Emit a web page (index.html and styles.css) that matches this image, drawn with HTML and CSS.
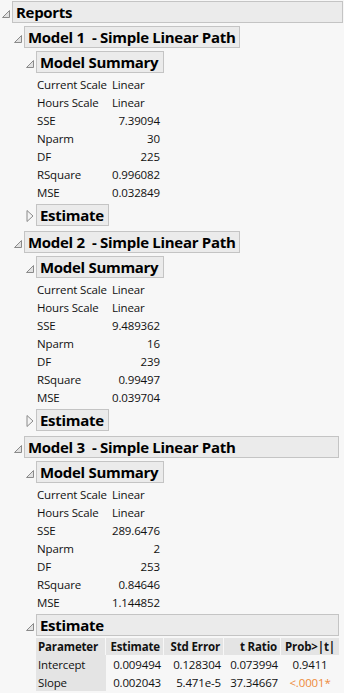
FILE: index.html
```html
<!DOCTYPE html>
<html>
<head>
<meta charset="utf-8">
<title>Reports</title>
<link rel="stylesheet" href="styles.css">
</head>
<body>

<div class="node root">
  <div class="head">
    <span class="tog"><svg width="10" height="10" viewBox="0 0 10 10"><polygon points="1.5,8.5 8.5,1.5 8.5,8.5" class="tri-open"/></svg></span>
    <div class="title">Reports</div>
  </div>
  <div class="body">

    <!-- model 1 -->
    <div class="node model">
      <div class="head">
        <span class="tog"><svg width="10" height="10" viewBox="0 0 10 10"><polygon points="1.5,8.5 8.5,1.5 8.5,8.5" class="tri-open"/></svg></span>
        <div class="title">Model 1 &nbsp;- Simple Linear Path</div>
      </div>
      <div class="body">
        <div class="node">
          <div class="head">
            <span class="tog"><svg width="10" height="10" viewBox="0 0 10 10"><polygon points="1.5,8.5 8.5,1.5 8.5,8.5" class="tri-open"/></svg></span>
            <div class="title">Model Summary</div>
          </div>
          <div class="body">
            <table class="summary">
              <tr><td>Current Scale</td><td>Linear</td></tr>
              <tr><td>Hours Scale</td><td>Linear</td></tr>
              <tr><td>SSE</td><td class="num">7.39094</td></tr>
              <tr><td>Nparm</td><td class="num">30</td></tr>
              <tr><td>DF</td><td class="num">225</td></tr>
              <tr><td>RSquare</td><td class="num">0.996082</td></tr>
              <tr><td>MSE</td><td class="num">0.032849</td></tr>
            </table>
          </div>
        </div>
        <div class="node">
          <div class="head">
            <span class="tog"><svg width="8" height="12" viewBox="0 0 8 12"><polygon points="1,0.5 7,6 1,11.5" class="tri-closed"/></svg></span>
            <div class="title">Estimate</div>
          </div>
        </div>
      </div>
    </div>

    <!-- model 2 -->
    <div class="node model">
      <div class="head">
        <span class="tog"><svg width="10" height="10" viewBox="0 0 10 10"><polygon points="1.5,8.5 8.5,1.5 8.5,8.5" class="tri-open"/></svg></span>
        <div class="title">Model 2 &nbsp;- Simple Linear Path</div>
      </div>
      <div class="body">
        <div class="node">
          <div class="head">
            <span class="tog"><svg width="10" height="10" viewBox="0 0 10 10"><polygon points="1.5,8.5 8.5,1.5 8.5,8.5" class="tri-open"/></svg></span>
            <div class="title">Model Summary</div>
          </div>
          <div class="body">
            <table class="summary">
              <tr><td>Current Scale</td><td>Linear</td></tr>
              <tr><td>Hours Scale</td><td>Linear</td></tr>
              <tr><td>SSE</td><td class="num">9.489362</td></tr>
              <tr><td>Nparm</td><td class="num">16</td></tr>
              <tr><td>DF</td><td class="num">239</td></tr>
              <tr><td>RSquare</td><td class="num">0.99497</td></tr>
              <tr><td>MSE</td><td class="num">0.039704</td></tr>
            </table>
          </div>
        </div>
        <div class="node">
          <div class="head">
            <span class="tog"><svg width="8" height="12" viewBox="0 0 8 12"><polygon points="1,0.5 7,6 1,11.5" class="tri-closed"/></svg></span>
            <div class="title">Estimate</div>
          </div>
        </div>
      </div>
    </div>

    <!-- model 3 -->
    <div class="node model">
      <div class="head">
        <span class="tog"><svg width="10" height="10" viewBox="0 0 10 10"><polygon points="1.5,8.5 8.5,1.5 8.5,8.5" class="tri-open"/></svg></span>
        <div class="title">Model 3 &nbsp;- Simple Linear Path</div>
      </div>
      <div class="body">
        <div class="node">
          <div class="head">
            <span class="tog"><svg width="10" height="10" viewBox="0 0 10 10"><polygon points="1.5,8.5 8.5,1.5 8.5,8.5" class="tri-open"/></svg></span>
            <div class="title">Model Summary</div>
          </div>
          <div class="body">
            <table class="summary">
              <tr><td>Current Scale</td><td>Linear</td></tr>
              <tr><td>Hours Scale</td><td>Linear</td></tr>
              <tr><td>SSE</td><td class="num">289.6476</td></tr>
              <tr><td>Nparm</td><td class="num">2</td></tr>
              <tr><td>DF</td><td class="num">253</td></tr>
              <tr><td>RSquare</td><td class="num">0.84646</td></tr>
              <tr><td>MSE</td><td class="num">1.144852</td></tr>
            </table>
          </div>
        </div>
        <div class="node">
          <div class="head">
            <span class="tog"><svg width="10" height="10" viewBox="0 0 10 10"><polygon points="1.5,8.5 8.5,1.5 8.5,8.5" class="tri-open"/></svg></span>
            <div class="title">Estimate</div>
          </div>
          <div class="body">
            <table class="est">
              <tr>
                <th class="param">Parameter</th>
                <th class="c-est">Estimate</th>
                <th class="c-se">Std Error</th>
                <th class="c-t">t Ratio</th>
                <th class="c-p">Prob&gt;|t|</th>
              </tr>
              <tr>
                <td class="param">Intercept</td>
                <td class="c-est">0.009494</td>
                <td class="c-se">0.128304</td>
                <td class="c-t">0.073994</td>
                <td class="c-p">0.9411</td>
              </tr>
              <tr>
                <td class="param">Slope</td>
                <td class="c-est">0.002043</td>
                <td class="c-se">5.471e-5</td>
                <td class="c-t">37.34667</td>
                <td class="c-p"><span class="sig">&lt;.0001*</span></td>
              </tr>
            </table>
          </div>
        </div>
      </div>
    </div>

  </div>
</div>

</body>
</html>
```

FILE: styles.css
```css
body {
	margin: 0;
	padding: 1px 1px 0 0;
	background: #f7f7f7;
	font-family: "Open Sans", "Noto Sans", sans-serif;
	font-size: 11.5px;
	color: #111;
}

/* outline nodes */
.node {
	display: flex;
	flex-direction: column;
	width: fit-content;
	margin-bottom: 3px;
}
.root { width: auto; }
.model { margin-bottom: 2px; }

.head {
	display: flex;
	align-items: flex-end;
}
.tog {
	width: 12px;
	flex: none;
	display: flex;
	justify-content: center;
	padding-bottom: 4px;
}
.tog svg { display: block; }
.tri-open {
	fill: #e2e2e2;
	stroke: #8a8a8a;
	stroke-width: 1;
}
.tri-closed {
	fill: #f4f4f4;
	stroke: #8a8a8a;
	stroke-width: 1;
}
.title {
	flex: 1;
	height: 20px;
	line-height: 20px;
	padding: 0 4px 0 3px;
	border: 1px solid #c4c4c4;
	background: #ebebeb;
	font-weight: bold;
	font-size: 15px;
	color: #000;
	white-space: nowrap;
	letter-spacing: -0.3px;
}
.body {
	padding: 3px 0 0 12px;
}

/* model summary */
.summary {
	border-collapse: collapse;
	margin: -1px 4px 0 0;
	letter-spacing: -0.15px;
}
.summary td {
	height: 18px;
	padding: 0 0 0 1px;
	white-space: nowrap;
}
.summary td:first-child {
	width: 74px;
}
.summary td.num {
	text-align: right;
	padding-right: 0;
}

/* estimate table */
.est {
	border-collapse: separate;
	border-spacing: 0;
	margin-top: -1px;
	table-layout: fixed;
	width: 303px;
	letter-spacing: -0.15px;
}
.est th, .est td {
	box-sizing: border-box;
	padding: 0 3px;
	white-space: nowrap;
}
.est th {
	height: 17px;
	background: #e4e4e4;
	border-right: 1px solid #f7f7f7;
	font-weight: bold;
}
.est th:last-child { border-right: 0; }
.est td { height: 18px; }
.est .param {
	text-align: left;
	width: 70px;
	padding-left: 2px;
}
.est td.param { background: #e4e4e4; }
.est .c-est { width: 58px; text-align: right; }
.est .c-se { width: 60px; text-align: right; }
.est .c-t { width: 57px; text-align: right; }
.est .c-p { width: 58px; text-align: center; }
.sig { color: #ee8a3a; }
```
